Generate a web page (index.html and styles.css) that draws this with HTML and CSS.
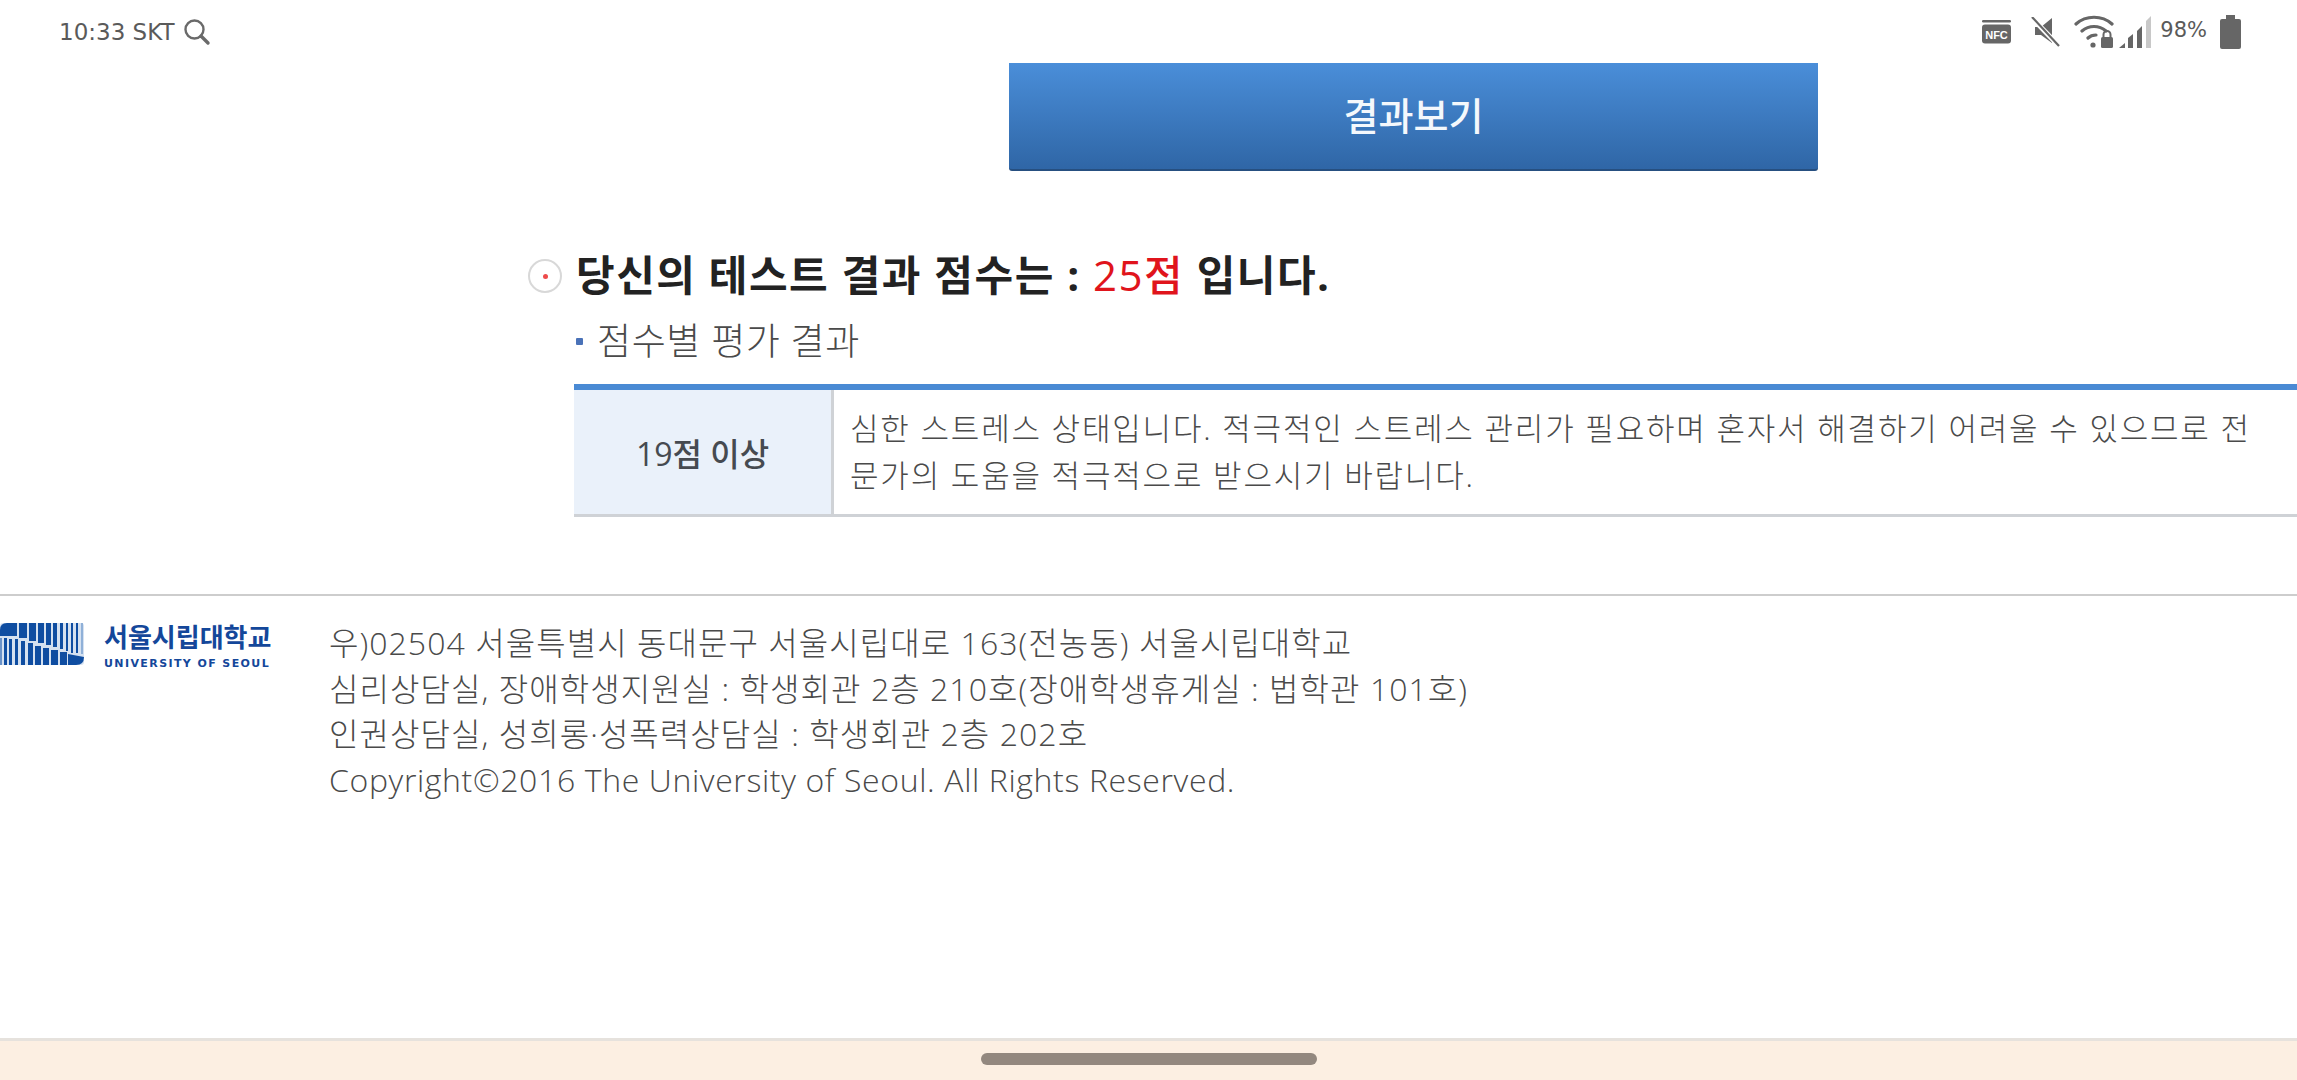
FILE: index.html
```html
<!DOCTYPE html>
<html lang="ko">
<head>
  <meta charset="UTF-8" />
  <meta name="viewport" content="width=device-width, initial-scale=1.0" />
  <title>스트레스 테스트 결과</title>
  <link rel="stylesheet" href="styles.css">
</head>
<body>
  <div class="status">
    <div class="status-left">
      <span class="clock">10:33 SKT</span>
      <svg class="ico-search" width="28" height="28" viewBox="0 0 28 28"><circle cx="11.5" cy="11.5" r="9" fill="none" stroke="#6a6a6a" stroke-width="2.4"/><path d="M18 18l7 7" stroke="#6a6a6a" stroke-width="3.4" stroke-linecap="round"/></svg>
    </div>
    <div class="status-right">
      <svg class="ico-nfc" width="30" height="24" viewBox="0 0 30 24"><rect x="0" y="0" width="29" height="2.5" rx="1.2" fill="#666"/><rect x="0" y="4.5" width="29" height="19" rx="3" fill="#666"/><text x="14.5" y="18.5" text-anchor="middle" class="nfc-label">NFC</text></svg>
      <svg class="ico-mute" width="30" height="30" viewBox="0 0 30 30"><path d="M4 10h6l11-9v25l-11-8H4z" fill="#666"/><path d="M1 1l27 28" stroke="#fff" stroke-width="5"/><path d="M1 0l27 29" stroke="#666" stroke-width="2.2"/></svg>
      <svg class="ico-wifi" width="40" height="34" viewBox="0 0 40 34"><path d="M2 9C12 0 28 0 38 9M8 16c7-6 17-6 24 0M14 23c2-2 5-3 8-3" fill="none" stroke="#666" stroke-width="3.2" stroke-linecap="round"/><circle cx="19" cy="30" r="2.6" fill="#666"/><rect x="27" y="22" width="12" height="11" rx="1.5" fill="#666"/><path d="M29.5 22v-2.500a3.500 3.500 0 0 1 7 0V22" fill="none" stroke="#666" stroke-width="2"/></svg>
      <svg class="ico-signal" width="32" height="32" viewBox="0 0 32 32"><path d="M0 32l6-5v5z" fill="#666"/><path d="M9 32V22l5-4v14z" fill="#666"/><path d="M18 32V15l5-5v22z" fill="#666"/><path d="M27 32V5l5-5v32z" fill="#c8c8c8"/></svg>
      <span class="battery-pct">98%</span>
      <div class="battery"></div>
    </div>
  </div>

  <div class="main">
    <div class="btn-wrap">
      <div class="btn-result">결과보기</div>
    </div>

    <div class="result">
      <div class="result-title">
        <span class="bullet"><i></i></span>
        <h2>당신의 테스트 결과 점수는 : <em>25점</em> 입니다.</h2>
      </div>
      <div class="sub-title"><i></i>점수별 평가 결과</div>
      <table class="score-table">
        <tr>
          <th>19점 이상</th>
          <td>심한 스트레스 상태입니다. 적극적인 스트레스 관리가 필요하며 혼자서 해결하기 어려울 수 있으므로 전<br>문가의 도움을 적극적으로 받으시기 바랍니다.</td>
        </tr>
      </table>
    </div>
  </div>

  <div class="footer">
    <div class="logo">
      <svg width="84" height="42" viewBox="0 0 84 42">
        <rect width="84" height="42" rx="3" fill="#d5e1f0"/>
        <g fill="#0f4da1">
          <path d="M0 13V7q0-7 7-7h10v13z"/>
          <rect x="19" y="0" width="8" height="15"/>
          <rect x="29" y="0" width="7" height="18"/>
          <rect x="38" y="0" width="6" height="20"/>
          <rect x="46" y="0" width="5" height="22"/>
          <rect x="53" y="0" width="4" height="24"/>
          <rect x="60" y="0" width="3" height="26"/>
          <rect x="66" y="0" width="2" height="28"/>
          <rect x="71" y="0" width="2" height="30"/>
          <rect x="76" y="0" width="2" height="30"/>
          <rect x="4" y="15" width="3" height="27"/>
          <rect x="9" y="16" width="3" height="26"/>
          <rect x="15" y="16" width="3" height="26"/>
          <rect x="21" y="18" width="4" height="24"/>
          <rect x="28" y="20" width="5" height="22"/>
          <rect x="35" y="23" width="6" height="19"/>
          <rect x="43" y="25" width="6" height="17"/>
          <rect x="51" y="27" width="7" height="15"/>
          <rect x="60" y="29" width="7" height="13"/>
          <path d="M68 31l16 3q0 8-8 8h-8z"/>
        </g>
        <rect x="0" y="15" width="2" height="27" fill="#6a92c8"/>
        <rect x="81" y="0" width="2" height="31" fill="#8fb0d8"/>
      </svg>
      <div class="logo-text">
        <strong>서울시립대학교</strong>
        <span>UNIVERSITY OF SEOUL</span>
      </div>
    </div>
    <div class="address">
      <p>우)02504 서울특별시 동대문구 서울시립대로 163(전농동) 서울시립대학교</p>
      <p>심리상담실, 장애학생지원실 : 학생회관 2층 210호(장애학생휴게실 : 법학관 101호)</p>
      <p>인권상담실, 성희롱·성폭력상담실 : 학생회관 2층 202호</p>
      <p class="copy">Copyright©2016 The University of Seoul. All Rights Reserved.</p>
    </div>
  </div>

  <div class="navbar"><div class="nav-pill"></div></div>
</body>
</html>
```

FILE: styles.css
```css
html, body { margin: 0; padding: 0; }
body {
  width: 2297px;
  height: 1080px;
  overflow: hidden;
  background: #fff;
  color: #444;
  font-family: "Open Sans", "Noto Sans CJK KR", sans-serif;
  display: flex;
  flex-direction: column;
}

/* status bar */
.status {
  height: 63px;
  padding: 0 56px 0 59px;
  display: flex;
  justify-content: space-between;
  align-items: center;
  flex-shrink: 0;
}
.status-left, .status-right { display: flex; align-items: center; }
.clock { font-family: "DejaVu Sans", sans-serif; font-size: 23px; color: #5a5a5a; margin-right: 8px; }
.nfc-label { font-family: "Liberation Sans", sans-serif; font-size: 11px; font-weight: bold; fill: #fff; }
.ico-nfc { margin-right: 19px; }
.ico-mute { margin-right: 13px; }
.ico-wifi { margin-right: 5px; }
.battery-pct { font-family: "DejaVu Sans", sans-serif; font-size: 21px; color: #5a5a5a; margin: 0 13px 3px 9px; }
.battery {
  width: 21px;
  height: 30px;
  margin-top: 4px;
  background: #666;
  border-radius: 2px;
  position: relative;
}
.battery::before {
  content: "";
  position: absolute;
  top: -4px;
  left: 6px;
  width: 9px;
  height: 4px;
  background: #666;
}

/* button */
.main { flex: 1; }
.btn-wrap { display: flex; padding-left: 1009px; }
.btn-result {
  width: 809px;
  height: 108px;
  padding-bottom: 6px;
  box-sizing: border-box;
  background: linear-gradient(#4a8ed9, #2f66a6);
  border-bottom: 2px solid #264f80;
  border-radius: 0 0 3px 3px;
  color: #f4f8fc;
  font-size: 38px;
  font-weight: 500;
  display: flex;
  align-items: center;
  justify-content: center;
}

/* result */
.result { padding: 75px 0 0 528px; }
.result-title { display: flex; align-items: center; height: 60px; }
.bullet {
  width: 30px;
  height: 30px;
  margin-right: 14px;
  border: 2px solid #d8d8d8;
  border-radius: 50%;
  display: flex;
  align-items: center;
  justify-content: center;
}
.bullet i { width: 5px; height: 5px; background: #ee4b4b; border-radius: 50%; }
.result-title h2 {
  margin: 0 0 2px;
  font-size: 42px;
  font-weight: 700;
  color: #222;
  line-height: 60px;
  letter-spacing: 1.5px;
  white-space: nowrap;
}
.result-title em { font-style: normal; font-weight: 500; color: #e0141c; }
.sub-title {
  margin: 10px 0 0 48px;
  font-size: 37px;
  line-height: 50px;
  letter-spacing: 0.6px;
  color: #4a4a4a;
  font-weight: 300;
  display: flex;
  align-items: center;
}
.sub-title i {
  width: 7px;
  height: 7px;
  margin-right: 14px;
  background: #4a72b8;
  border-radius: 1px;
}

/* table */
.score-table {
  margin: 18px 0 0 46px;
  width: 1723px;
  border-collapse: collapse;
  border-top: 6px solid #4a8ad4;
  border-bottom: 3px solid #cfd2d6;
}
.score-table th {
  width: 257px;
  height: 124px;
  padding: 0;
  background: #eaf1fa;
  border-right: 3px solid #cfd2d6;
  font-size: 32px;
  font-weight: 500;
  color: #464a50;
}
.score-table td {
  padding: 0 0 0 16px;
  font-size: 31px;
  line-height: 47px;
  letter-spacing: 1.8px;
  color: #4a4a4a;
  font-weight: 300;
  white-space: nowrap;
}

/* footer */
.footer {
  position: absolute;
  top: 594px;
  left: 0;
  width: 100%;
  box-sizing: border-box;
  border-top: 2px solid #cdcdcd;
  padding: 24px 0 0 0;
  display: flex;
}
.logo { width: 329px; display: flex; flex-shrink: 0; align-items: flex-start; }
.logo svg { margin-top: 3px; }
.logo-text { margin-left: 20px; display: flex; flex-direction: column; color: #14479a; }
.logo-text strong { font-size: 26px; line-height: 34px; font-weight: 700; white-space: nowrap; }
.logo-text span { font-family: "DejaVu Sans", sans-serif; font-size: 11px; font-weight: 700; letter-spacing: 1.4px; white-space: nowrap; margin-top: 3px; }
.address p {
  margin: 0;
  font-size: 32px;
  line-height: 45.7px;
  letter-spacing: 1.05px;
  font-weight: 300;
  color: #4a4a4a;
  white-space: nowrap;
}
.address p.copy { letter-spacing: 0.63px; }

/* bottom nav */
.navbar {
  height: 27px;
  flex-shrink: 0;
  background: #fcefe2;
  border-top: 3px solid #e6e2dd;
  display: flex;
  justify-content: center;
  padding-top: 12px;
}
.nav-pill { width: 336px; height: 12px; background: #93887f; border-radius: 6px; }
```
